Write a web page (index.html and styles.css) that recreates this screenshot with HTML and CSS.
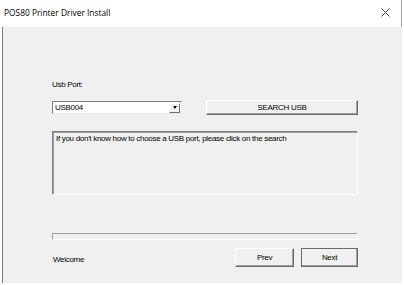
FILE: index.html
```html
<!DOCTYPE html>
<html lang="en">
<head>
    <meta charset="UTF-8">
    <title>POS80 Printer Driver Install</title>
    <link rel="stylesheet" href="styles.css">
</head>
<body>
    <div class="window">
        <div class="titlebar">
            <span class="title">POS80 Printer Driver Install</span>
            <svg class="close" width="9" height="9" viewBox="0 0 9 9">
                <path d="M0.5 0.5 L8.5 8.5 M8.5 0.5 L0.5 8.5" stroke="#444" stroke-width="1" fill="none"/>
            </svg>
        </div>
        <div class="content">
            <div class="label">Usb Port:</div>
            <div class="port-row">
                <div class="combo">
                    <span class="combo-value">USB004</span>
                    <span class="combo-arrow"></span>
                </div>
                <button class="btn search">SEARCH USB</button>
            </div>
            <div class="info">If you don't know how to choose a USB port, please click on the search</div>
            <div class="progress"></div>
            <div class="footer">
                <span class="status">Welcome</span>
                <div class="nav">
                    <button class="btn nav-btn">Prev</button>
                    <button class="btn nav-btn next">Next</button>
                </div>
            </div>
        </div>
    </div>
</body>
</html>
```

FILE: styles.css
```css
body {
    margin: 0;
    background-color: #ffffff;
    font-family: 'Liberation Sans', Arial, sans-serif;
}
.window {
    width: 404px;
    height: 285px;
    display: flex;
    flex-direction: column;
}
.titlebar {
    height: 27px;
    background-color: #fff;
    display: flex;
    align-items: center;
    justify-content: space-between;
    padding: 0 11px 3px 4px;
    box-sizing: border-box;
    border-right: 1px solid #a0a0a0;
    margin-right: 2px;
}
.title {
    font-family: 'Open Sans', 'Noto Sans', sans-serif;
    font-size: 8.4px;
    color: #000;
}
.close {
    display: block;
}
.content {
    flex: 1;
    margin: 0 2px 2px 2px;
    border-left: 1px solid #7a7a7a;
    background-color: #f0f0f0;
    padding: 53px 44px 0 49px;
    font-size: 8px;
    letter-spacing: -0.3px;
    color: #000;
}
.label {
    margin-bottom: 11px;
}
.port-row {
    display: flex;
    justify-content: space-between;
    align-items: center;
    margin-bottom: 16px;
}
.combo {
    width: 128px;
    height: 11px;
    background-color: #fff;
    border: 1px solid;
    border-color: #7a7a7a #e8e8e8 #e8e8e8 #7a7a7a;
    display: flex;
    align-items: center;
    justify-content: space-between;
}
.combo-value {
    padding-left: 2px;
}
.combo-arrow {
    width: 9px;
    height: 8px;
    margin-right: 1px;
    background-color: #f0f0f0;
    border: 1px solid;
    border-color: #fff #707070 #707070 #fff;
    display: flex;
    align-items: center;
    justify-content: center;
}
.combo-arrow::after {
    content: '';
    border-left: 2.5px solid transparent;
    border-right: 2.5px solid transparent;
    border-top: 3px solid #000;
}
.btn {
    font-family: 'Liberation Sans', Arial, sans-serif;
    font-size: 8px;
    letter-spacing: -0.3px;
    color: #000;
    background-color: #f0f0f0;
    border: 1px solid;
    border-color: #fff #6a6a6a #6a6a6a #fff;
    box-shadow: inset -1px -1px 0 #a0a0a0;
    padding: 0;
    cursor: pointer;
}
.search {
    width: 152px;
    height: 15px;
}
.info {
    height: 58px;
    border: 1px solid;
    border-color: #808080 #ffffff #ffffff #808080;
    box-shadow: inset 1px 1px 0 #a0a0a0;
    padding: 2px 3px;
    margin-bottom: 38px;
}
.progress {
    height: 5px;
    border: 1px solid;
    border-color: #a0a0a0 #fff #fff #a0a0a0;
    margin-bottom: 8px;
}
.footer {
    display: flex;
    justify-content: space-between;
    align-items: center;
}
.status {
    padding-left: 1px;
    padding-top: 3px;
}
.nav {
    display: flex;
    gap: 7px;
}
.nav-btn {
    width: 59px;
    height: 19px;
}
.next {
    border-color: #6a6a6a;
    width: 57px;
}
```
